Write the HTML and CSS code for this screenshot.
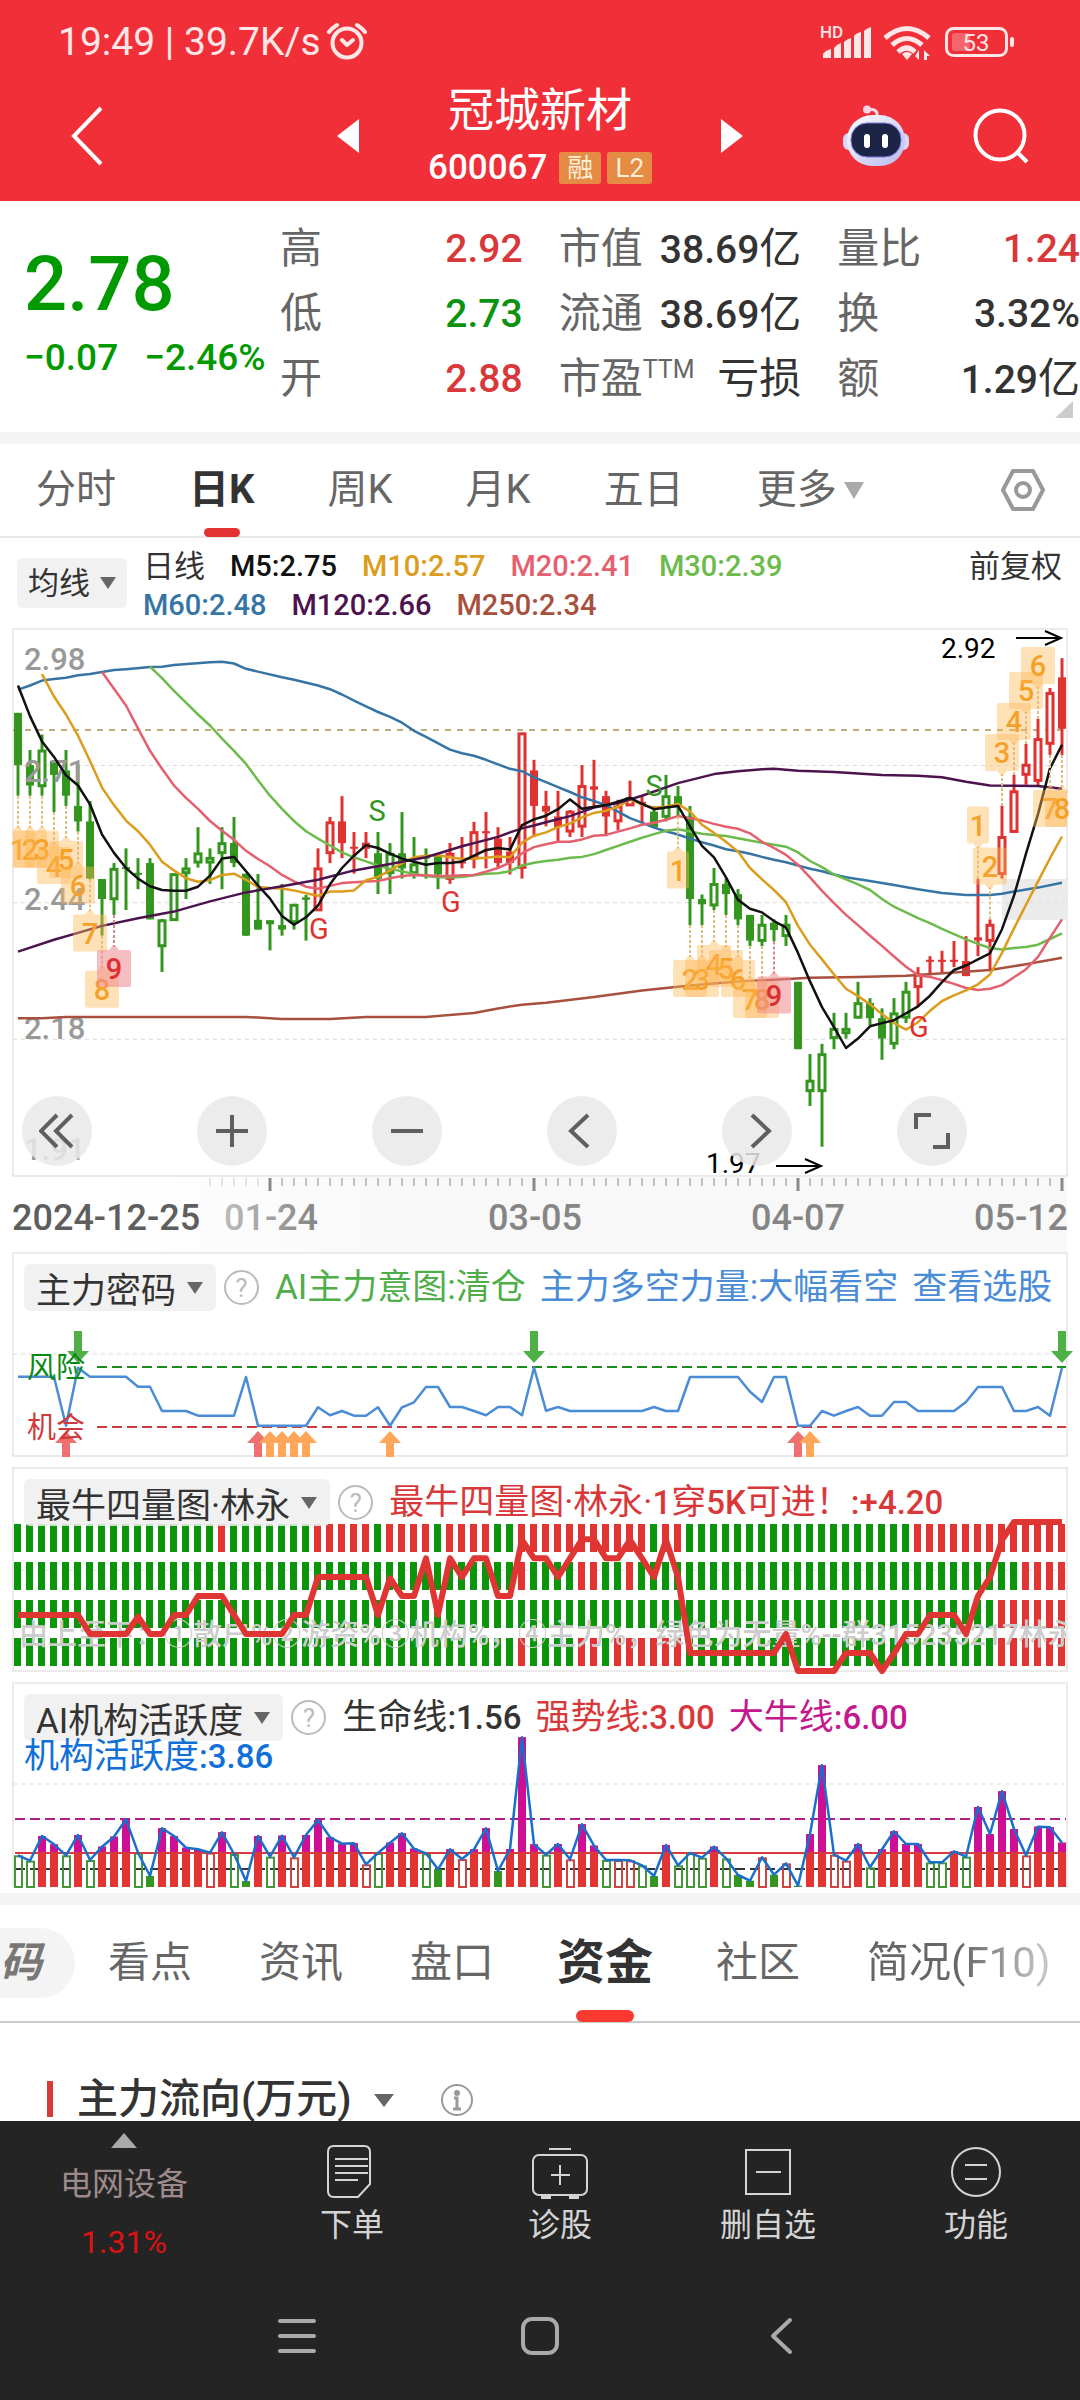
FILE: index.html
```html
<!DOCTYPE html>
<html lang="zh-CN">
<head>
<meta charset="utf-8">
<meta name="viewport" content="width=device-width">
<title>冠城新材 600067</title>
<link rel="stylesheet" href="styles.css">
</head>
<body>
<header class="top">
  <div class="status">
    <span class="clock">19:49 | 39.7K/s</span>
    <svg class="alarm" width="40" height="38" viewBox="0 0 40 38" fill="none" stroke="#ffe6e7" stroke-width="4" stroke-linecap="round" stroke-linejoin="round"><circle cx="20" cy="21" r="14.500"/><path d="M15 18l5 5 6-5M2 10q3-4 8-7M38 10q-3-4-8-7"/></svg>
    <svg class="phone" width="200" height="42" viewBox="818 20 200 42" fill="#ffe6e7">
      <text x="820" y="38" class="hd">HD</text>
      <path d="M823 54q3-4 8-5v9h-8zM834 48q3-4 7-5v15h-7zM844 42q3-3 7-4v20h-7zM854 36q2-3 7-4v26h-7zM864 31q3-3 7-4v31h-7z"/>
      <g fill="none" stroke="#ffe6e7" stroke-width="5"><path d="M885 38q22-19 44 0M892 45q15-13 30 0M898 52q9-8 17 0"/></g>
      <path d="M902 54q5-4 10 0l-5 6zM915 56l4-6v10zM924 50v10h3v-4h3z"/>
      <rect x="946.500" y="28.500" width="60" height="27" rx="7" fill="none" stroke="#ffe6e7" stroke-width="3"/>
      <rect x="952" y="33" width="18" height="18" rx="3" opacity=".3"/>
      <rect x="1010" y="37" width="4" height="10" rx="2"/>
      <text x="976" y="51" text-anchor="middle" class="charge">53</text>
    </svg>
  </div>
  <div class="titlebar">
    <div class="lead"><button class="icon" aria-label="返回"><svg width="34" height="60" viewBox="0 0 34 60" fill="none" stroke="#fff" stroke-width="4"><path d="M31 2L4 30l27 28"/></svg></button></div>
    <div class="stock">
      <button class="icon" aria-label="上一只"><svg width="22" height="34" viewBox="0 0 22 34"><path d="M22 0v34L0 17z" fill="#fff"/></svg></button>
      <div class="name">
        <h1>冠城新材</h1>
        <p><b>600067</b><span class="tag">融</span><span class="tag">L2</span></p>
      </div>
      <button class="icon" aria-label="下一只"><svg width="22" height="34" viewBox="0 0 22 34"><path d="M0 0v34l22-17z" fill="#fff"/></svg></button>
    </div>
    <div class="tail">
      <button class="icon" aria-label="助手"><svg width="66" height="62" viewBox="0 0 66 62"><defs><linearGradient id="bot" x1="0" x2="1" y2="1"><stop offset="0" stop-color="#fff"/><stop offset="1" stop-color="#b9b8ee"/></linearGradient></defs><path d="M25 5q10-2 9 6" fill="none" stroke="#f3d9ee" stroke-width="3"/><circle cx="24" cy="4.500" r="4" fill="#f6d4e4"/><rect x="0" y="28" width="66" height="17" rx="6" fill="#d9d9f7"/><rect x="4" y="10" width="58" height="51" rx="25" fill="url(#bot)"/><rect x="8" y="18" width="50" height="34" rx="16" fill="#1c2548" stroke="#7b78e0" stroke-width="1"/><rect x="21" y="29" width="6" height="14" rx="3" fill="#fff"/><rect x="39" y="29" width="6" height="14" rx="3" fill="#fff"/></svg></button>
      <button class="icon" aria-label="搜索"><svg width="56" height="56" viewBox="0 0 56 56" fill="none" stroke="#fff" stroke-width="4"><circle cx="27" cy="27" r="24.500"/><path d="M44 44l10 10"/></svg></button>
    </div>
  </div>
</header>

<section class="quote">
  <div class="price">
    <strong>2.78</strong>
    <p><span>−0.07</span><span>−2.46%</span></p>
  </div>
  <dl class="stats">
    <div><dt>高</dt><dd class="up">2.92</dd></div>
    <div><dt>市值</dt><dd>38.69<i>亿</i></dd></div>
    <div><dt>量比</dt><dd class="up">1.24</dd></div>
    <div><dt>低</dt><dd class="down">2.73</dd></div>
    <div><dt>流通</dt><dd>38.69<i>亿</i></dd></div>
    <div><dt>换</dt><dd>3.32%</dd></div>
    <div><dt>开</dt><dd class="up">2.88</dd></div>
    <div><dt>市盈<sup>TTM</sup></dt><dd><i>亏损</i></dd></div>
    <div><dt>额</dt><dd>1.29<i>亿</i></dd></div>
  </dl>
  <svg class="corner" width="18" height="17" viewBox="0 0 18 17"><path d="M18 0v17H0z" fill="#ccc"/></svg>
</section>

<nav class="periods">
  <a href="#">分时</a><a href="#" class="on">日K</a><a href="#">周K</a><a href="#">月K</a><a href="#">五日</a>
  <a href="#" class="more">更多<svg width="20" height="17" viewBox="0 0 20 17"><path d="M0 0h20L10 17z" fill="#aaa"/></svg></a>
  <button class="icon gear" aria-label="设置"><svg width="46" height="44" viewBox="0 0 46 44" fill="none" stroke="#999" stroke-width="4" stroke-linejoin="round"><path d="M13 3h20l10 19-10 19H13L3 22z"/><circle cx="23" cy="22" r="7"/></svg></button>
</nav>

<section class="averages">
  <button class="pick">均线<svg width="16" height="12" viewBox="0 0 16 12"><path d="M0 0h16L8 12z"/></svg></button>
  <div class="values">
    <p><span class="day">日线</span><b class="m5">M5:2.75</b><b class="m10">M10:2.57</b><b class="m20">M20:2.41</b><b class="m30">M30:2.39</b></p>
    <p><b class="m60">M60:2.48</b><b class="m120">M120:2.66</b><b class="m250">M250:2.34</b></p>
  </div>
  <span class="day">前复权</span>
</section>

<section class="panel">
  <svg id="kline" viewBox="0 628 1080 549"></svg>
  <div class="tools">
    <button aria-label="更早"><svg width="36" height="36" viewBox="0 0 36 36"><path d="M18 2L2 18l16 16M33 2L17 18l16 16"/></svg></button>
    <button aria-label="放大"><svg width="36" height="36" viewBox="0 0 36 36"><path d="M18 2v32M2 18h32"/></svg></button>
    <button aria-label="缩小"><svg width="36" height="36" viewBox="0 0 36 36"><path d="M2 18h32"/></svg></button>
    <button aria-label="左移"><svg width="36" height="36" viewBox="0 0 36 36"><path d="M24 2L7 18l17 16"/></svg></button>
    <button aria-label="右移"><svg width="36" height="36" viewBox="0 0 36 36"><path d="M13 2l17 16-17 16"/></svg></button>
    <button aria-label="全屏"><svg width="36" height="36" viewBox="0 0 36 36"><path d="M2 16V2h15M34 20v14H19"/></svg></button>
  </div>
</section>
<svg id="axis" viewBox="0 1177 1080 75"></svg>

<section class="panel">
  <svg id="intent" viewBox="0 1252 1080 215"></svg>
  <div class="head">
    <button class="pick">主力密码<svg width="16" height="12" viewBox="0 0 16 12"><path d="M0 0h16L8 12z"/></svg></button>
    <button class="help" aria-label="说明">?</button>
    <span class="legend"><span class="safe">AI主力意图:清仓</span><span class="blue">主力多空力量:大幅看空</span><a href="#" class="blue">查看选股</a></span>
  </div>
</section>

<section class="panel">
  <svg id="volume" viewBox="0 1467 1080 215"></svg>
  <div class="head">
    <button class="pick">最牛四量图·林永<svg width="16" height="12" viewBox="0 0 16 12"><path d="M0 0h16L8 12z"/></svg></button>
    <button class="help" aria-label="说明">?</button>
    <span class="legend up">最牛四量图·林永·<b>1</b>穿<b>5K</b>可进！<b>:+4.20</b></span>
  </div>
</section>

<section class="panel">
  <svg id="active" viewBox="0 1682 1080 211"></svg>
  <div class="head">
    <button class="pick">AI机构活跃度<svg width="16" height="12" viewBox="0 0 16 12"><path d="M0 0h16L8 12z"/></svg></button>
    <button class="help" aria-label="说明">?</button>
    <span class="legend"><span>生命线<b>:1.56</b></span><span class="up">强势线<b>:3.00</b></span><span class="bull">大牛线<b>:6.00</b></span></span>
    <span class="second">机构活跃度<b>:3.86</b></span>
  </div>
</section>

<nav class="topics">
  <a href="#" class="pill">码</a><a href="#">看点</a><a href="#">资讯</a><a href="#">盘口</a><a href="#" class="on">资金</a><a href="#">社区</a><a href="#" class="fade">简况(F10)</a>
</nav>
<section class="flow">
  <h2>主力流向(万元)</h2>
  <svg width="20" height="13" viewBox="0 0 20 13"><path d="M0 0h20L10 13z" fill="#666"/></svg>
  <svg class="info" width="34" height="34" viewBox="0 0 34 34" fill="none" stroke="#999" stroke-width="2"><circle cx="17" cy="17" r="15"/><circle cx="17" cy="10" r="2" fill="#999"/><path d="M14 15h3v10M13 26h8" stroke-width="3"/></svg>
</section>

<footer>
  <div class="actions">
    <a href="#" class="sector"><svg width="26" height="15" viewBox="0 0 26 15"><path d="M13 0l13 15H0z"/></svg><span>电网设备</span><em>1.31%</em></a>
    <a href="#"><svg width="60" height="56" viewBox="0 0 60 56"><path d="M12 3h30q6 0 6 6v32L36 54H12q-6 0-6-6V9q0-6 6-6zM13 16h33M13 23h33M13 30h33M13 37h23"/></svg>下单</a>
    <a href="#"><svg width="60" height="56" viewBox="0 0 60 56"><rect x="3" y="12" width="54" height="40" rx="6"/><path d="M19 6h22M30 22v20M21 32h19"/><path d="M11 54h10M39 54h10" stroke-width="4"/></svg>诊股</a>
    <a href="#"><svg width="60" height="56" viewBox="0 0 60 56"><path d="M8 7h44v44H8zM18 29h25"/></svg>删自选</a>
    <a href="#"><svg width="60" height="56" viewBox="0 0 60 56"><circle cx="30" cy="29" r="24"/><path d="M19 22h22M19 36h22"/></svg>功能</a>
  </div>
  <div class="system">
    <button class="icon" aria-label="菜单"><svg width="38" height="38" viewBox="0 0 38 38"><path d="M2 4h34M2 19h34M2 34h34"/></svg></button>
    <button class="icon" aria-label="主页"><svg width="38" height="38" viewBox="0 0 38 38"><rect x="2" y="2" width="34" height="34" rx="9"/></svg></button>
    <button class="icon" aria-label="后退"><svg width="38" height="38" viewBox="0 0 38 38"><path d="M26 3L9 19l17 16"/></svg></button>
  </div>
</footer>
<script src="charts.js"></script>
</body>
</html>
```
FILE: styles.css
```css
* { box-sizing: border-box; }
body, h1, h2, p, dl, dd { margin: 0; }
body {
  min-height: 100vh;
  display: flex;
  flex-direction: column;
  overflow-x: hidden;
  background: #fff;
  color: #333;
  font-family: Roboto, "Noto Sans CJK SC", sans-serif;
  font-size: 31px;
}
button { border: 0; padding: 0; background: none; font: inherit; color: inherit; }
a { color: inherit; text-decoration: none; }
svg { display: block; flex: none; }
b, strong { font-weight: 500; }
.icon { display: flex; }
.up { color: #d9383a; }
.down { color: #0b9310; }
.blue { color: #4a8cd6; }
.safe { color: #4fae49; }
.bull { color: #c4188f; }

.top { background: #f12f38; color: #fff; height: 201px; }
.status { display: flex; align-items: center; height: 82px; padding: 0 62px 0 58px; color: #ffe6e7; }
.clock { font-size: 39px; line-height: 46px; padding-top: 2px; }
.alarm { margin-left: 6px; }
.phone { margin-left: auto; }
.hd { font-size: 17px; font-weight: 500; }
.charge { font-size: 24px; }
.titlebar { display: grid; grid-template-columns: 1fr 406px 1fr; align-items: center; }
.lead { padding-left: 70px; }
.stock { display: flex; align-items: center; justify-content: space-between; }
.name { text-align: center; }
.name h1 { font-size: 46px; line-height: 56px; font-weight: 400; }
.name p { display: flex; align-items: center; gap: 6px; padding-top: 8px; line-height: 44px; font-size: 35px; }
.name b { margin-right: 6px; }
.tag { padding: 0 8px; border-radius: 3px; background: #e58b43; color: #ffefd8; font-size: 26px; line-height: 32px; }
.tail { display: flex; justify-content: flex-end; align-items: center; gap: 64px; padding-right: 51px; }

.quote { display: flex; position: relative; height: 243px; border-bottom: 12px solid #f4f4f4; }
.price { width: 280px; padding: 34px 0 0 24px; color: #009a00; white-space: nowrap; }
.price strong { display: block; font-size: 76px; line-height: 98px; }
.price p { display: flex; gap: 26px; font-size: 37px; line-height: 50px; font-weight: 500; }
.stats { flex: 1; display: grid; grid-template-columns: repeat(3, 1fr); column-gap: 36px; align-content: start; padding-top: 16px; line-height: 64px; font-size: 42px; white-space: nowrap; }
.stats div { display: flex; justify-content: space-between; }
.stats dt { color: #666; }
.stats dd { font-weight: 500; font-size: 39px; }
.stats i { font-size: 42px; font-style: normal; font-weight: 400; }
.stats sup { font-size: 25px; line-height: 0; }
.corner { position: absolute; right: 7px; bottom: 14px; }

.periods { display: flex; align-items: center; gap: 73px; height: 94px; padding: 0 34px 0 36px; border-bottom: 2px solid #e8e8e8; color: #666; font-size: 40px; white-space: nowrap; }
.periods a { position: relative; line-height: 94px; }
.periods .on { color: #333; font-weight: 700; }
.on::after { content: ""; position: absolute; left: 50%; bottom: 0; width: 36px; height: 9px; margin-left: -18px; border-radius: 5px; background: #e23332; }
.more { display: flex; align-items: center; gap: 7px; }
.gear { margin-left: auto; }

.averages { display: flex; align-items: flex-start; height: 90px; padding: 9px 18px 0 17px; line-height: 39px; font-weight: 500; white-space: nowrap; }
.averages .pick { height: 50px; margin: 11px 16px 0 0; padding: 0 11px; font-size: 31px; gap: 10px; font-weight: 400; }
.values { flex: 1; }
.values p { display: flex; gap: 25px; font-size: 29px; }
.day { font-size: 31px; font-weight: 400; }
.m5 { color: #111; }
.m10 { color: #dc9c1c; }
.m20 { color: #e5606f; }
.m30 { color: #6dbb4c; }
.m60 { color: #3674a4; }
.m120 { color: #4c134f; }
.m250 { color: #a8503e; }

.pick { display: flex; align-items: center; gap: 11px; height: 47px; padding: 0 13px 0 12px; border-radius: 6px; background: rgba(238, 238, 238, .85); font-size: 35px; white-space: nowrap; fill: #666; }
.panel { display: grid; }
.panel > * { grid-area: 1 / 1; }
.panel > svg, #axis { width: 100%; }
.tools { align-self: end; display: flex; gap: 105px; padding: 0 22px 11px; }
.tools button { width: 70px; height: 70px; border-radius: 50%; background: rgba(233, 233, 233, .85); display: grid; place-items: center; }
.tools svg { fill: none; stroke: #5f5f5f; stroke-width: 4; }
.head { align-self: start; display: flex; flex-wrap: wrap; align-items: center; column-gap: 8px; padding: 12px 8px 0 24px; font-size: 35px; white-space: nowrap; }
.help { width: 35px; height: 35px; border: 2px solid #bbb; border-radius: 50%; color: #bbb; font-size: 26px; line-height: 30px; }
.legend { display: flex; gap: 14px; margin-left: 8px; line-height: 46px; }
.legend b, .second b { font-size: 33px; }
.legend.up { display: block; }
.second { width: 100%; margin-top: -7px; line-height: 46px; color: #1070d8; }

#kline text, #axis text, #intent text, #volume text { font-family: Roboto, "Noto Sans CJK SC", sans-serif; }
.scale { font-size: 31px; font-weight: 500; fill: #999; }
.date { font-size: 36px; font-weight: 500; fill: #858585; }
.date.first { fill: #5e5e5e; }
.note { font-size: 28px; fill: #000; }
.signal, .zone { font-size: 29px; }
.count { font-size: 29px; font-weight: 500; text-anchor: middle; }
.ticker { font-size: 29px; font-weight: 500; fill: #ccc; }

.topics { display: flex; align-items: center; gap: 67px; height: 130px; border-top: 12px solid #f4f4f4; border-bottom: 2px solid #ccc; color: #666; font-size: 42px; white-space: nowrap; }
.topics a { position: relative; line-height: 118px; }
.topics .on { color: #333; font-size: 48px; font-weight: 700; margin: 0 -4px; }
.topics .on::after { width: 58px; height: 12px; margin-left: -29px; border-radius: 6px; background: #fa3a30; }
.topics .pill { width: 75px; margin-right: -34px; border-radius: 0 35px 35px 0; background: #f4f4f4; color: #777; line-height: 70px; font-style: italic; font-weight: 700; }
.fade { background: linear-gradient(90deg, #666 50%, #ccc); -webkit-background-clip: text; background-clip: text; color: transparent; }
.flow { flex: 1; display: flex; align-items: flex-start; padding: 58px 47px 0; }
.flow h2 { border-left: 6px solid #d93a38; padding-left: 24px; margin-right: 22px; font-size: 41px; line-height: 36px; font-weight: 500; }
.flow svg { margin-top: 13px; }
.flow .info { margin: 2px 0 0 46px; }

footer { height: 279px; background: #242424; color: #d4d4d4; }
.actions { display: grid; grid-template-columns: 248px repeat(4, 1fr); height: 170px; font-size: 32px; line-height: 40px; text-align: center; }
.actions a { display: flex; flex-direction: column; align-items: center; gap: 6px; padding-top: 22px; }
.actions a svg { fill: none; stroke: #d4d4d4; stroke-width: 2; }
.actions a.sector { gap: 0; padding-top: 12px; color: #9c8b8a; }
.actions a.sector svg { fill: #aaa; stroke: none; }
.sector span { margin-top: 16px; }
.sector em { margin-top: 18px; font-style: normal; color: #dd1212; }
.system { display: grid; grid-template-columns: repeat(3, 1fr); justify-items: center; padding: 26px 176px 0; }
.system svg { fill: none; stroke: #aaa; stroke-width: 4; stroke-linecap: round; stroke-linejoin: round; }
```
FILE: charts.js
```js
const NS = 'http://www.w3.org/2000/svg';
const RED = '#df3231', GREEN = '#34961f', LEFT = 13, RIGHT = 1067;
const X = i => 18 + 12 * i;
const $ = id => document.getElementById(id);

function add(parent, tag, attrs, text) {
  const el = document.createElementNS(NS, tag);
  for (const k in attrs) el.setAttribute(k, attrs[k]);
  if (text) el.textContent = text;
  parent.appendChild(el);
  return el;
}
const hline = (svg, y, stroke, width, dash, x1 = LEFT) =>
  add(svg, 'line', { x1, x2: RIGHT - 1, y1: y, y2: y, stroke, 'stroke-width': width, 'stroke-dasharray': dash });
const frame = (svg, y1, y2) =>
  add(svg, 'rect', { x: LEFT, y: y1, width: RIGHT - LEFT, height: y2 - y1, fill: 'none', stroke: '#ebebeb', 'stroke-width': 2 });
function curve(svg, data, y, stroke, width) {
  const pts = data.split(' ').map(p => p.split(':').map(Number)).map(([i, v]) => X(i) + ',' + y(v).toFixed(1));
  add(svg, 'polyline', { points: pts.join(' '), fill: 'none', stroke, 'stroke-width': width, 'stroke-linejoin': 'round' });
}
const run = (from, values) => values.map((v, k) => (from + k) + ':' + v).join(' ');

/* Candles: high, low, body top, body bottom, kind (G/R filled, g/r hollow) */
const candles = `252,455,252,380,G 343,455,380,430,G 305,455,343,433,g 370,495,370,404,G 343,480,393,455,G 380,543,480,518,G
468,660,518,658,G 659,798,659,708,G 620,747,633,710,g 584,735,630,634,G 608,684,644,648,G 608,758,620,758,G
757,887,759,825,g 645,761,646,761,g 608,708,632,646,g 532,631,595,620,g 584,671,606,620,g 532,684,570,597,g
507,630,571,620,G 646,798,646,798,G 647,783,759,783,G 760,834,760,770,G 671,798,772,783,G 720,783,721,766,g
698,810,704,710,G 584,737,632,737,r 507,620,519,597,r 456,608,518,571,R 544,646,580,584,R 544,608,570,585,R
544,696,596,658,G 571,696,596,646,g 495,658,596,633,G 556,658,622,646,g 584,658,604,608,G 600,684,600,648,G
571,671,596,660,r 556,633,616,620,R 519,633,543,610,r 495,633,542,546,R 532,630,560,620,R 556,648,592,620,R
301,658,301,633,r 367,556,393,480,R 443,530,480,494,R 443,569,506,532,R 490,556,493,544,r 380,556,430,532,r
367,480,432,440,R 443,554,456,506,R 465,540,480,519,r 418,480,460,480,r 453,520,470,474,R 480,532,494,532,G
404,518,455,508,g 431,506,456,480,G 480,772,506,708,G 697,772,708,721,G 632,735,670,725,g 658,747,671,696,G
684,772,696,758,G 747,823,747,810,G 747,823,770,812,g 758,812,766,784,G 747,823,770,800,g 911,1076,911,1076,G
1088,1215,1152,1180,g 1063,1315,1087,1180,g 987,1076,1025,1050,g 987,1050,1025,1038,g 911,1001,962,1000,g 951,1018,963,1000,G
976,1102,1000,1050,G 951,1076,987,1064,g 911,1012,934,1000,g 875,970,892,925,r 848,895,857,862,R 835,887,857,862,R
811,875,857,861,R 799,897,860,897,R 658,848,802,810,R 758,885,770,812,r 480,658,555,648,r 404,545,443,545,r
328,428,378,405,r 267,430,315,420,r 191,355,202,329,r 118,355,165,291,R`.split(/\s+/).map(c => c.split(','));

const averages = [
  ['#3674a4', '0:195 1:185 2:173 3:169 4:166 5:160 6:157 7:152 8:147 9:145 11:140 12:139 13:135 16:128 17:127 18:131 19:144 20:151 22:165 23:171 25:185 26:194 27:207 28:222 29:236 30:250 31:262 32:276 33:296 34:311 36:342 37:351 38:357 39:367 40:378 41:389 42:395 43:410 44:422 45:434 46:446 47:459 48:468 49:478 50:494 51:510 52:521 53:533 54:542 55:550 56:560 57:569 58:577 59:586 60:591 61:597 62:605 63:612 64:618 65:626 66:634 67:640 68:648 69:655 71:664 73:674 75:684 77:693 79:698 81:698 82:695 83:690 85:680 87:668'],
  ['#a8503e', '0:1000 2:1000 4:997 19:997 22:1002 26:1002 29:997 34:997 38:987 40:976 42:967 44:962 48:948 52:932 56:920 60:910 63:906 66:901 70:899 74:896 78:888 81:882 84:868 87:852'],
  ['#6dbb4c', run(11, [139, 167, 198, 227, 256, 283, 315, 345, 377, 417, 455, 487, 517, 542, 560, 577, 594, 606, 616, 626, 634, 640, 647, 652, 655, 655, 654, 650, 646, 645, 640, 626, 619, 615, 612, 607, 605, 598, 588, 578, 568, 558, 549, 541, 537, 543, 548, 551, 554, 559, 565, 570, 575, 580, 594, 615, 630, 648, 660, 672, 686, 708, 727, 741, 755, 767, 781, 794, 807, 818, 828, 832, 828, 826, 820, 806, 792])],
  ['#e5606f', run(7, [152, 193, 234, 290, 345, 389, 430, 460, 487, 517, 541, 563, 590, 610, 628, 649, 665, 678, 683, 676, 669, 667, 665, 664, 657, 652, 649, 650, 652, 652, 650, 649, 641, 632, 619, 596, 581, 574, 568, 568, 562, 553, 551, 543, 535, 526, 521, 514, 505, 510, 516, 524, 531, 536, 547, 568, 583, 600, 624, 655, 688, 718, 747, 772, 798, 823, 849, 874, 895, 899, 907, 916, 926, 931, 928, 919, 900, 880, 850, 803, 758])],
  ['#dc9c1c', run(2, [157, 212, 256, 308, 370, 435, 478, 516, 542, 575, 617, 638, 657, 666, 662, 649, 646, 661, 679, 681, 682, 687, 694, 700, 690, 690, 687, 662, 654, 638, 620, 606, 602, 601, 606, 610, 609, 607, 604, 606, 570, 553, 545, 532, 523, 508, 497, 492, 482, 464, 477, 484, 482, 475, 494, 526, 546, 568, 592, 632, 660, 686, 716, 774, 820, 856, 893, 928, 946, 966, 990, 1012, 1028, 1010, 982, 958, 944, 932, 917, 893, 840, 780, 722, 665, 608, 555])],
  ['#4c134f', '0:837 3:808 5:791 7:774 10:755 13:739 16:714 19:692 22:677 25:661 28:638 31:622 34:606 37:579 40:556 41:545 42:535 43:528 44:520 46:505 48:484 50:473 52:455 55:424 58:402 60:395 62:390 63:389 65:394 68:397 72:404 75:406 77:410 79:421 81:430 85:431 87:438'],
  ['#111', run(0, [185, 260, 322, 360, 405, 430, 476, 550, 595, 632, 658, 677, 686, 688, 688, 678, 651, 609, 605, 640, 675, 707, 750, 771, 753, 724, 672, 632, 602, 576, 583, 597, 609, 617, 624, 620, 620, 616, 602, 588, 583, 587, 527, 513, 504, 488, 464, 487, 482, 478, 470, 460, 475, 488, 484, 480, 530, 578, 606, 655, 710, 732, 741, 762, 778, 840, 910, 973, 1022, 1073, 1050, 1020, 1012, 1005, 988, 971, 945, 912, 882, 871, 856, 841, 782, 700, 597, 500, 388, 330])]
];

/* Nine-turn counters: [candle, number, +1 below the candle / -1 above it] */
const counters = [[0, 1, 1], [1, 2, 1], [2, 3, 1], [3, 4, 1], [4, 5, 1], [5, 6, 1], [6, 7, 1], [7, 8, 1], [8, 9, 1],
  [55, 1, 1], [56, 2, 1], [57, 3, 1], [58, 4, 1], [59, 5, 1], [60, 6, 1], [61, 7, 1], [62, 8, 1], [63, 9, 1],
  [80, 1, -1], [81, 2, -1], [82, 3, -1], [83, 4, -1], [84, 5, -1], [85, 6, -1], [86, 7, 1], [87, 8, 1]];

function drawKline() {
  const svg = $('kline'), y = v => 610 + v / 2.45;
  frame(svg, 629, 1176);
  add(svg, 'rect', { x: 1002, y: 879, width: 64, height: 41, fill: '#ddd', opacity: .6 });
  [381, 717, 1052].forEach(v => hline(svg, y(v), '#ddd', 1, '4 4'));
  hline(svg, 730, '#c3ad78', 2, '6 6');
  candles.forEach(([hi, lo, t, b, kind], i) => {
    const c = /g/i.test(kind) ? GREEN : RED, x = X(i);
    add(svg, 'line', { x1: x, x2: x, y1: y(+hi), y2: y(+lo), stroke: c, 'stroke-width': 3 });
    const hollow = kind === kind.toLowerCase(), h = Math.max(2, (b - t) / 2.45);
    add(svg, 'rect', hollow
      ? { x: x - 3, y: y(+t) + 1, width: 6, height: Math.max(2, h - 2), fill: '#fff', stroke: c, 'stroke-width': 3 }
      : { x: x - 4, y: y(+t), width: 8, height: h, fill: c });
  });
  [['2.98', 670], ['2.71', 782], ['2.44', 910], ['2.18', 1039], ['1.91', 1160]].forEach(([s, b]) =>
    add(svg, 'text', { x: 24, y: b, class: 'scale' }, s));
  averages.forEach(([c, d]) => curve(svg, d, y, c, 2.5));
  counters.forEach(([i, n, dir]) => {
    const x = X(i), end = y(+candles[i][dir > 0 ? 1 : 0]), w = n === 1 && i ? 9 : 15, red = n === 9;
    const tip = end + 32 * dir, base = tip + 5 * dir, far = base + 33 * dir;
    add(svg, 'line', { x1: x, x2: x, y1: end, y2: tip, stroke: red ? '#cf8a8a' : '#dfbf80', 'stroke-width': 2, 'stroke-dasharray': '3 2' });
    const l = Math.max(x - w, LEFT + 2), r = Math.min(x + w, RIGHT - 2);
    const tint = red ? '#f08a8f' : '#ffb858';
    add(svg, 'path', { d: `M${x - 4} ${base}L${x} ${tip}L${x + 4} ${base}H${r}V${far}H${l}V${base}z`, fill: tint, stroke: tint, 'stroke-width': 4, 'stroke-linejoin': 'round', opacity: red ? .55 : .42 });
    add(svg, 'text', { x, y: (base + far) / 2 + 11, class: 'count', fill: red ? '#dd2f33' : '#f5a127' }, String(n));
  });
  [['S', 377, 821, GREEN], ['S', 654, 796, GREEN], ['G', 319, 939, RED], ['G', 451, 912, RED], ['G', 919, 1037, RED]].forEach(([s, x, b, c]) =>
    add(svg, 'text', { x, y: b, fill: c, 'text-anchor': 'middle', class: 'signal' }, s));
  [['2.92', 941, 658, 1016, 638], ['1.97', 706, 1173, 776, 1166]].forEach(([s, x, b, ax, ay]) => {
    add(svg, 'text', { x, y: b, class: 'note' }, s);
    add(svg, 'path', { d: `M${ax} ${ay}h45m-16 -7l16 7l-16 7`, fill: 'none', stroke: '#000', 'stroke-width': 2 });
  });
}

function drawAxis() {
  const svg = $('axis'), defs = add(svg, 'defs', {});
  [['shade', '#fff', '#f8f8f8', .1, .4], ['ink', '#bbb', '#858585', 0, 1]].forEach(([id, a, b, o1, o2]) => {
    const g = add(defs, 'linearGradient', { id });
    add(g, 'stop', { offset: o1, 'stop-color': a });
    add(g, 'stop', { offset: o2, 'stop-color': b });
  });
  add(svg, 'rect', { x: 0, y: 1177, width: 1067, height: 75, fill: 'url(#shade)' });
  for (let i = 16; i < 88; i++) {
    const major = [21, 43, 65, 87].includes(i);
    add(svg, 'line', { x1: X(i), x2: X(i), y1: 1178, y2: major ? 1191 : 1186, stroke: i < 21 ? '#ccc' : '#888', 'stroke-width': major ? 3 : 1 });
  }
  add(svg, 'text', { x: 12, y: 1230, class: 'date first' }, '2024-12-25');
  [['01-24', 271], ['03-05', 535], ['04-07', 798], ['05-12', 1021]].forEach(([s, x], k) => {
    const t = add(svg, 'text', { x, y: 1230, class: 'date', 'text-anchor': 'middle' }, s);
    if (!k) t.style.fill = 'url(#ink)';
  });
}

function drawIntent() {
  const svg = $('intent'), y = v => 1240 + v / 3;
  frame(svg, 1253, 1456);
  hline(svg, 1354, '#ddd', 1, '4 4');
  hline(svg, 1367, '#1a8c1a', 2, '10 5', 97);
  hline(svg, 1427, '#cf3a3c', 2, '10 5', 97);
  curve(svg, '0:410 3:410 4:557 5:383 6:410 9:410 10:440 11:440 12:513 14:513 15:527 18:527 19:411 20:557 24:557 25:502 26:526 27:513 28:527 29:527 30:502 31:557 32:502 33:487 34:441 35:441 36:501 37:501 38:513 39:526 40:501 41:501 42:526 43:383 44:512 45:501 46:513 52:513 53:501 54:513 55:513 56:411 60:411 61:455 62:486 63:411 64:411 65:557 66:557 67:513 68:527 69:513 70:501 71:527 72:527 73:486 74:486 75:513 78:513 79:486 80:441 82:441 83:513 84:513 85:501 86:527 87:383', y, '#4a8cd6', 2.5);
  [5, 43, 87].forEach(i => add(svg, 'path', { d: `M${X(i) - 4} 1331h8v20h7l-11 12l-11 -12h7z`, fill: '#4fb045' }));
  [[4, 1], [20, 1], [21], [22], [23], [24], [31], [65, 1], [66]].forEach(([i, hot]) =>
    add(svg, 'path', { d: `M${X(i) - 4} 1457h8v-14h7l-11 -12l-11 12h7z`, fill: hot ? '#ee7070' : '#ffa659' }));
  add(svg, 'text', { x: 27, y: 1378, class: 'zone', fill: '#0a8a14' }, '风险');
  add(svg, 'text', { x: 27, y: 1438, class: 'zone', fill: '#cf3a3c' }, '机会');
}

function drawVolume() {
  const svg = $('volume'), y = v => 1240 + v / 3;
  const inside = (i, spans) => spans.some(([a, b = a]) => i >= a && i <= b);
  const rows = [
    [1524, [[17], [25, 29], [31, 34], [36, 39], [42, 52], [54, 55], [75, 87]]],
    [1562, [[42], [47, 48], [51], [84, 87]]],
    [1600, [[82, 87]]],
    [1638, [[42], [47, 48], [50, 55], [82, 87]]]
  ];
  frame(svg, 1468, 1671);
  hline(svg, 1570, '#ddd', 1, '4 4');
  rows.forEach(([top, spans]) => {
    for (let i = 0; i < 88; i++)
      add(svg, 'rect', { x: X(i) - 4, y: top, width: 7, height: 28, fill: inside(i, spans) ? '#e13433' : '#0a950a' });
  });
  const ticker = add(svg, 'svg', { x: 14, y: 1600, width: 1052, height: 80, viewBox: '14 1600 1052 80' });
  add(ticker, 'text', { x: 19, y: 1645, class: 'ticker' }, '由上至下：①散户%②游资%③机构%，④主力%，绿色为无量%--群315235217林永');
  curve(svg, '0:1125 5:1125 6:1182 9:1182 10:1130 11:1182 12:1182 13:1125 14:1125 15:1068 17:1068 18:1125 19:1182 22:1182 23:1125 24:1125 25:1011 29:1011 30:1125 31:1015 32:1068 33:1068 34:955 35:1125 36:955 37:1011 38:955 39:955 40:1068 41:1068 42:900 43:955 44:955 45:1011 46:955 47:898 48:898 49:955 50:955 51:900 52:955 53:1011 54:900 55:1011 56:1239 63:1239 64:1182 65:1293 68:1293 69:1239 71:1239 72:1293 73:1240 74:1182 75:1182 76:1125 78:1125 79:1182 80:1068 81:1011 82:900 83:846 87:846', y, '#df3533', 6);
}

/* Activity bars: value and kind (S strong, G weak, g/r hollow) */
const activity = '526g 542g 468S 493S 526g 465S 540g 500S 470S 418S 518g 588G 445S 468S 503S 508S 518r 457S 522g 603G 468S 530g 467S 532r 465S 420S 472S 491S 490S 553r 519g 488S 460S 506S 520g 568G 508S 537r 508S 445S 573G 507S 172S 493S 524g 492S 538r 433S 497S 540g 540r 541r 556g 588G 495S 556g 519g 533g 500S 535g 585G 602G 532r 584G 550r 617G 462S 256S 524r 542r 492S 562g 508S 454S 492S 492S 547g 547g 514S 530g 381S 462S 334S 447S 526r 440S 442S 488S'.split(' ');

function drawActivity() {
  const svg = $('active'), y = v => 1680 + v / 3, base = 1887;
  add(svg, 'path', { d: `M${LEFT} ${base}V1683H${RIGHT}V${base}`, fill: 'none', stroke: '#ebebeb', 'stroke-width': 2 });
  hline(svg, 1784, '#ddd', 1, '4 4');
  hline(svg, 1819, '#b01c86', 2, '10 5', 15);
  hline(svg, 1869, '#333', 2, '10 5', 15);
  activity.forEach((a, i) => {
    const v = parseInt(a), kind = a.slice(-1), t = y(v), x = X(i);
    if (kind === 'g' || kind === 'r')
      add(svg, 'rect', { x: x - 3, y: t + 1, width: 7, height: base - t - 1, fill: 'none', stroke: kind === 'g' ? '#459638' : '#cf4340', 'stroke-width': 2 });
    else {
      add(svg, 'rect', { x: x - 4, y: t, width: 8, height: base - t, fill: kind === 'G' ? GREEN : '#e13433' });
      if (kind === 'S' && t < 1853) add(svg, 'rect', { x: x - 4, y: t, width: 8, height: 1853 - t, fill: '#cf0f93' });
    }
  });
  hline(svg, 1853, '#d93a3c', 2, 'none', 15);
  curve(svg, run(0, activity.map(a => parseInt(a))), y, '#1a6fcb', 2.5);
}

drawKline();
drawAxis();
drawIntent();
drawVolume();
drawActivity();
```
